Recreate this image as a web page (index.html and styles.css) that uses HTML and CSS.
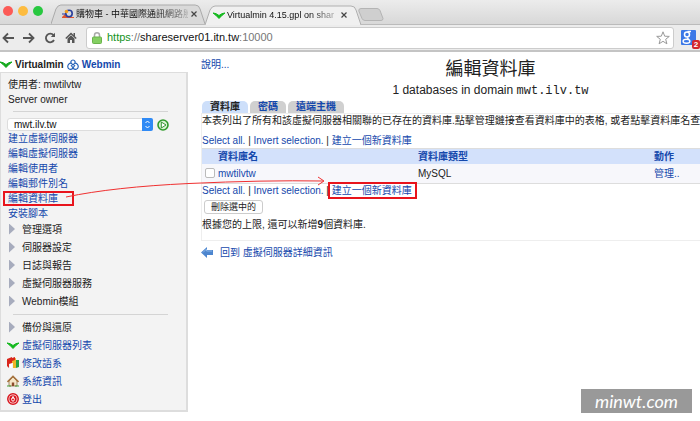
FILE: index.html
```html
<!DOCTYPE html>
<html lang="zh-Hant">
<head>
<meta charset="utf-8">
<title>Virtualmin 4.15.gpl on shareserver01.itn.tw</title>
<link rel="stylesheet" href="styles.css">
</head>
<body>
<header class="browser">
  <div class="tabstrip">
    <span class="lights"><i class="light red"></i><i class="light amber"></i><i class="light green"></i></span>
    <div class="tab">
      <svg class="tab-shape" viewBox="0 0 156 20" preserveAspectRatio="none" aria-hidden="true"><path d="M0 20 L5 5 Q7 1 10 1 H146 Q150 1 151 5 L156 20" fill="#d9d9d9" stroke="#aaa"/></svg>
      <svg class="favicon" width="12" height="10" viewBox="0 0 12 10" aria-hidden="true"><path d="M0 8 3 5l2 3h7v1H0z" fill="#e0552f"/><circle cx="7" cy="4.500" r="3.200" fill="none" stroke="#2b3f9c" stroke-width="1.600"/><circle cx="4.500" cy="2.500" r="1.800" fill="#f0a020"/><path d="M0 5h4" stroke="#2b3f9c"/></svg>
      <span class="tab-title">購物車 - 中華國際通訊網路股</span>
      <button class="close" type="button" aria-label="關閉分頁"><svg width="6" height="6" viewBox="0 0 6 6"><path d="M.5.5l5 5M5.500.5l-5 5" stroke="#444" stroke-width="1.200"/></svg></button>
    </div>
    <div class="tab active">
      <svg class="tab-shape" viewBox="0 0 156 20" preserveAspectRatio="none" aria-hidden="true"><path d="M0 20 L5 5 Q7 1 10 1 H146 Q150 1 151 5 L156 20" fill="#f0f0f0" stroke="#b0b0b0"/></svg>
      <svg class="favicon" width="12" height="7" viewBox="0 0 12 7" aria-hidden="true"><path d="M0 1q3 0 6 2.500Q9 1 12 1 9 3 6 6.500 3 3 0 1z" fill="#12b81c" stroke="#12b81c"/></svg>
      <span class="tab-title">Virtualmin 4.15.gpl on shar</span>
      <button class="close" type="button" aria-label="關閉分頁"><svg width="6" height="6" viewBox="0 0 6 6"><path d="M.5.5l5 5M5.500.5l-5 5" stroke="#444" stroke-width="1.200"/></svg></button>
    </div>
    <button class="newtab" type="button" aria-label="新分頁"><svg width="26" height="13" viewBox="0 0 26 13"><path d="M3 .5h16q2 0 3 2l3 8q0 2-2 2H7q-2 0-3-2L.8 3Q.5.5 3 .5z" fill="#cfcfcf" stroke="#b4b4b4"/></svg></button>
  </div>
  <div class="toolbar">
    <button class="nav" type="button" aria-label="上一頁"><svg width="12" height="12" viewBox="0 0 12 12"><path d="M12 6H1.500M6 1.500 1.500 6 6 10.500" fill="none" stroke="#555" stroke-width="1.800"/></svg></button>
    <button class="nav" type="button" aria-label="下一頁"><svg width="12" height="12" viewBox="0 0 12 12"><path d="M0 6h10.500M6 1.500 10.500 6 6 10.500" fill="none" stroke="#555" stroke-width="1.800"/></svg></button>
    <button class="nav" type="button" aria-label="重新載入"><svg width="12" height="12" viewBox="0 0 12 12"><path d="M9.500 3.200A4.300 4.300 0 1 0 10 8" fill="none" stroke="#555" stroke-width="1.800"/><path d="M11 .8V5H6.800z" fill="#555"/></svg></button>
    <button class="nav" type="button" aria-label="首頁"><svg width="12" height="12" viewBox="0 0 12 12"><path d="M.8 6.500 6 1.500l5.200 5" fill="none" stroke="#555" stroke-width="1.500"/><path d="M8.500 1h1.500v3H8.500zM2.500 6.500 6 3.300l3.500 3.200V11H7V8H5v3H2.500z" fill="#555"/></svg></button>
    <div class="omnibox">
      <svg width="10" height="12" viewBox="0 0 10 12" aria-hidden="true"><path d="M2.500 6V3.300a2.500 2.500 0 0 1 5 0V6" fill="none" stroke="#aaa" stroke-width="1.500"/><rect x=".5" y="5" width="9" height="6.500" rx="1" fill="#84cf62" stroke="#6bb34c"/></svg>
      <span class="url"><span class="scheme">https</span><span class="dim">://</span>shareserver01.itn.tw<span class="dim">:10000</span></span>
      <button class="star" type="button" aria-label="加入書籤"><svg width="14" height="14" viewBox="0 0 14 14"><path d="M7 .8 8.700 5.200l4.600.2-3.600 2.900 1.200 4.500L7 10.300l-3.900 2.500 1.200-4.500L.7 5.400l4.600-.2z" fill="#fff" stroke="#999"/></svg></button>
    </div>
    <button class="ext" type="button" aria-label="擴充功能，2 則通知"><svg width="15" height="15" viewBox="0 0 15 15"><rect width="15" height="15" rx="1" fill="#3b78e7"/><path d="M10 1.500H6.500M7 7.500Q6 8.500 8 9.500" fill="none" stroke="#fff" stroke-width="1.400"/><circle cx="6" cy="4.500" r="2.500" fill="none" stroke="#fff" stroke-width="1.500"/><ellipse cx="5.500" cy="11.300" rx="3.400" ry="2" fill="none" stroke="#fff" stroke-width="1.400"/></svg><span class="count">2</span></button>
  </div>
</header>

<div class="page">
  <nav class="side">
    <div class="brands">
      <svg width="12" height="7" viewBox="0 0 12 7" aria-hidden="true"><path d="M0 1q3 0 6 2.500Q9 1 12 1 9 3 6 6.500 3 3 0 1z" fill="#12a81c" stroke="#12a81c"/></svg>
      <b>Virtualmin</b>
      <svg width="12" height="12" viewBox="0 0 12 12" aria-hidden="true"><path d="M6 1c2 0 2.500 2 1.800 3.200C9.500 4 11.500 5.500 11.200 8c-.2 2.500-3 3-5.200 1.200C3.800 11 1 10.500.8 8 .5 5.500 2.500 4 4.200 4.200 3.500 3 4 1 6 1zM4 6l2 3 2-3M4.200 4.200 6 6l1.800-1.800" fill="#fff" stroke="#2562b8" stroke-width="1.200"/></svg>
      <a href="#webmin"><b>Webmin</b></a>
    </div>
    <div class="box">
      <div class="line">使用者: mwtilvtw</div>
      <div class="line">Server owner</div>
      <hr>
      <form class="domain">
        <span class="picker">
          <select aria-label="網域"><option>mwt.ilv.tw</option></select>
          <svg class="stepper" width="11" height="13" viewBox="0 0 11 13" aria-hidden="true"><path d="M0 0h9q2 0 2 2v9q0 2-2 2H0z" fill="#2f8af5"/><path d="M3.500 5 5.500 3l2 2M3.500 8l2 2 2-2" fill="none" stroke="#fff"/></svg>
        </span>
        <button class="go" type="button" aria-label="前往"><svg width="12" height="12" viewBox="0 0 12 12"><circle cx="6" cy="6" r="5" fill="#d9f2d3" stroke="#2f9a2a" stroke-width="1.600"/><path d="M4.300 3 9 6 4.300 9z" fill="#fff" stroke="#238a20" stroke-width=".9"/></svg></button>
      </form>
      <ul class="links">
        <li><a href="#create">建立虛擬伺服器</a></li>
        <li><a href="#edit">編輯虛擬伺服器</a></li>
        <li><a href="#users">編輯使用者</a></li>
        <li><a href="#mail">編輯郵件別名</a></li>
        <li><a class="marked" href="#db">編輯資料庫</a></li>
        <li><a href="#scripts">安裝腳本</a></li>
      </ul>
      <ul class="tree">
        <li><i class="fold"></i>管理選項</li>
        <li><i class="fold"></i>伺服器設定</li>
        <li><i class="fold"></i>日誌與報告</li>
        <li><i class="fold"></i>虛擬伺服器服務</li>
        <li><i class="fold"></i>Webmin模組</li>
      </ul>
      <hr>
      <ul class="tree">
        <li><i class="fold"></i>備份與還原</li>
        <li><svg width="12" height="7" viewBox="0 0 12 7" aria-hidden="true"><path d="M0 1q3 0 6 2.500Q9 1 12 1 9 3 6 6.500 3 3 0 1z" fill="#12b81c" stroke="#12b81c"/></svg><a href="#list">虛擬伺服器列表</a></li>
        <li><svg width="12" height="12" viewBox="0 0 12 12" aria-hidden="true"><path d="M0 2 5 0v6L2 7v4L0 9z" fill="#d9261c"/><path d="M5 2l4-1v10H6V6H5z" fill="#f0b429"/><path d="M5 1l3-1v3L5 4z" fill="#d9261c"/><path d="M9 3h3v7L9 11z" fill="#27a243"/><path d="M3 7h2v4H3z" fill="#fff"/></svg><a href="#lang">修改語系</a></li>
        <li><svg width="12" height="12" viewBox="0 0 12 12" aria-hidden="true"><path d="M2 6 6 2l4 4v5H2z" fill="#f5e6c8" stroke="#8a7048" stroke-width=".8"/><path d="M.5 7 6 1.300 11.500 7" fill="none" stroke="#a5713c" stroke-width="1.600"/><path d="M4.800 11V7.500h2.400V11z" fill="#8b4a2b"/><path d="M0 10.500h4v1H0zM8 10.500h4v1H8z" fill="#46a03c"/></svg><a href="#info">系統資訊</a></li>
        <li><svg width="12" height="12" viewBox="0 0 12 12" aria-hidden="true"><circle cx="6" cy="6" r="5.200" fill="#fff" stroke="#d8141c" stroke-width="1.500"/><circle cx="6" cy="6" r="3.700" fill="#d8141c"/><ellipse cx="6" cy="6.300" rx="1.400" ry="1.900" fill="none" stroke="#fff"/><path d="M6 3v3" stroke="#fff"/></svg><a href="#logout">登出</a></li>
      </ul>
    </div>
  </nav>

  <main class="main">
    <div class="heading">
      <a href="#help">說明...</a>
      <div class="titles">
        <h1>編輯資料庫</h1>
        <p>1 databases in domain <code>mwt.ilv.tw</code></p>
      </div>
    </div>
    <div class="subtabs">
      <b class="subtab on">資料庫</b>
      <a class="subtab" href="#password">密碼</a>
      <a class="subtab" href="#hosts">遠端主機</a>
    </div>
    <section class="panel">
      <p class="desc">本表列出了所有和該虛擬伺服器相關聯的已存在的資料庫.點擊管理鏈接查看資料庫中的表格, 或者點擊資料庫名查</p>
      <p class="actions"><a href="#all">Select all.</a> | <a href="#invert">Invert selection.</a> | <a href="#new">建立一個新資料庫</a></p>
      <table>
        <thead><tr><th class="tick"></th><th class="name">資料庫名</th><th class="type">資料庫類型</th><th>動作</th></tr></thead>
        <tbody><tr><td><input id="db1" type="checkbox"></td><td><label for="db1"><a href="#mwtilvtw">mwtilvtw</a></label></td><td>MySQL</td><td><a href="#manage">管理..</a></td></tr></tbody>
      </table>
      <p class="actions"><a href="#all2">Select all.</a> | <a href="#invert2">Invert selection.</a> | <a class="marked" href="#new2">建立一個新資料庫</a></p>
      <button class="delete" type="button">刪除選中的</button>
      <p class="limit">根據您的上限, 還可以新增<b>9</b>個資料庫.</p>
    </section>
    <a class="back" href="#details"><svg width="12" height="11" viewBox="0 0 12 11" aria-hidden="true"><path d="M0 5.500 6 0v3h6v5H6v3z" fill="#4d86cf"/><path d="M2 5.500 5.500 2v2H11" fill="none" stroke="#8ab4e6"/></svg>回到 虛擬伺服器詳細資訊</a>
  </main>

  <svg class="arrow" width="264" height="28" viewBox="0 0 264 28" aria-hidden="true"><path d="M2 23Q50 13 125 9.500T259 7M254 3l6 4-6 4" fill="none" stroke="#f03030"/></svg>
</div>
<div class="watermark">minwt.com</div>
</body>
</html>
```
FILE: styles.css
```css
* { box-sizing: border-box; }

body {
  margin: 0;
  position: relative;
  min-height: 100vh;
  overflow: hidden;
  background: #fff;
  color: #222;
  font: 10px/15px "Liberation Sans", "Noto Sans CJK TC", sans-serif;
}

a { color: #1448ac; text-decoration: none; }
p, h1, ul { margin: 0; padding: 0; }
ul { list-style: none; }
svg { display: block; flex: none; }
button { padding: 0; border: 0; background: none; font: inherit; color: inherit; }

/* Browser frame */
.browser { border-bottom: 2px solid #c4c4c4; }

.tabstrip {
  display: flex;
  align-items: flex-end;
  height: 25px;
  padding-left: 3px;
  background: linear-gradient(#ececec, #d8d8d8);
  border-bottom: 1px solid #bbb;
}

.lights { display: flex; gap: 5px; width: 48px; padding-bottom: 8px; }
.light { width: 10px; height: 10px; border-radius: 50%; }
.red { background: #fc5b57; }
.amber { background: #fdbc40; }
.green { background: #28c840; }

.tab {
  position: relative;
  display: flex;
  align-items: center;
  width: 154px;
  height: 20px;
  padding: 0 5px 0 11px;
  font-size: 9px;
}
.tab.active { z-index: 1; width: 156px; margin-bottom: -1px; padding: 0 11px 0 8px; }
.tab-shape { position: absolute; inset: 0; width: 100%; height: 100%; }
.favicon { position: relative; margin-right: 2px; }
.tab-title {
  position: relative;
  flex: 1;
  overflow: hidden;
  white-space: nowrap;
  color: #111;
  mask-image: linear-gradient(to right, #000 75%, rgba(0, 0, 0, 0.2));
}
.close { position: relative; width: 12px; height: 12px; display: grid; place-items: center; }
.newtab { margin: 0 0 3px -3px; }

.toolbar {
  display: flex;
  align-items: center;
  height: 25px;
  padding-left: 2px;
  background: #ececec;
}
.nav { width: 21px; flex: none; }
.omnibox {
  display: flex;
  flex: 1;
  align-items: center;
  gap: 5px;
  height: 22px;
  padding: 0 3px 0 5px;
  background: #fff;
  border: 1px solid #ccc;
  border-radius: 3px;
}
.url { flex: 1; font-size: 11px; color: #111; }
.scheme { color: #12931a; }
.dim { color: #777; }
.ext { position: relative; width: 26px; padding-left: 7px; flex: none; }
.count {
  position: absolute;
  right: 0;
  bottom: -4px;
  width: 8px;
  height: 9px;
  background: #d3272c;
  border-radius: 2px;
  color: #fff;
  font: bold 8px/9px "Liberation Sans", sans-serif;
}

/* Page */
.page { position: relative; display: flex; padding-top: 5px; }
.side { flex: none; width: 188px; }

.brands { display: flex; align-items: center; gap: 3px; height: 15px; }
.box {
  padding: 4px 6px 2px;
  background: #f3f3f3;
  border: 1px solid #ddd;
  border-width: 1px 2px 2px 1px;
}
.line { padding-left: 1px; }
hr {
  height: 1px;
  margin: 4px 12px 3px 6px;
  border: 0;
  background: #d4d4d4;
}
.domain { display: flex; align-items: center; gap: 4px; margin-top: 6px; }
.picker { position: relative; flex: none; width: 146px; height: 13px; }
select {
  display: block;
  width: 100%;
  height: 100%;
  padding: 0 16px 0 6px;
  appearance: none;
  background: #fff;
  border: 1px solid #ddd;
  border-radius: 3px;
  color: #111;
  font: 10px/11px "Liberation Sans", sans-serif;
}
.stepper { position: absolute; right: 0; top: 0; }

.links { padding-left: 1px; margin-bottom: -1px; }
.marked { position: relative; }
.marked::after { content: ""; position: absolute; border: 2px solid #e8141c; }
.links .marked::after { inset: -2px -16px -2px -5px; }
.actions .marked::after { inset: -3px -5px -3px -4px; }

.tree li { display: flex; align-items: center; height: 18px; color: #222; }
.tree svg { margin-right: 3px; }
.fold {
  width: 6px;
  height: 11px;
  margin: 0 7px 0 2px;
  background: #a7acbd;
  clip-path: polygon(0 0, 100% 50%, 0 100%);
}

.main { flex: 1; min-width: 0; padding-left: 13px; }
.heading { display: grid; grid-template-columns: 80px 1fr; }
.titles { text-align: center; }
h1 { font-size: 18px; line-height: 24px; font-weight: 400; }
.titles p { font-size: 12px; line-height: 18px; }
code { font: 12px/18px "Liberation Mono", monospace; }

.subtabs { display: flex; gap: 2px; padding-left: 1px; margin-top: 1px; }
.subtab {
  height: 12px;
  padding: 0 8px;
  background: #d0d0d0;
  border-radius: 5px 5px 0 0;
  font-weight: 700;
  line-height: 12px;
}
.subtab.on { background: #cddffa; }

.panel {
  padding-bottom: 8px;
  border: 1px solid #eee;
  border-right: 0;
}
.desc { line-height: 14px; white-space: nowrap; }
.actions { line-height: 14px; }
.desc + .actions { margin-top: 6px; }

table {
  width: 100%;
  border-collapse: collapse;
  border-top: 1px solid #ddd;
  border-bottom: 1px solid #ddd;
  table-layout: fixed;
}
th, td { padding: 0; text-align: left; line-height: 15px; }
th { background: #d3e1fb; color: #1448ac; }
td { height: 19px; background: #f7f7fb; }
.tick { width: 16px; }
.name { width: 200px; }
.type { width: 236px; }
input {
  display: block;
  width: 10px;
  height: 10px;
  margin: 0 0 0 3px;
  appearance: none;
  background: #fff;
  border: 1px solid #bbb;
  border-radius: 2px;
}
.delete {
  display: block;
  height: 14px;
  margin: 2px 0 3px 2px;
  padding: 0 6px;
  background: #fff;
  border: 1px solid #ccc;
  border-radius: 3px;
  font-size: 9px;
  line-height: 12px;
}
.back { display: flex; align-items: center; gap: 7px; margin-top: 4px; }

.arrow { position: absolute; left: 64px; top: 122px; pointer-events: none; }

.watermark {
  position: absolute;
  right: 8px;
  bottom: 8px;
  width: 111px;
  background: #999;
  color: #fff;
  font: italic 18px/24px Lato, sans-serif;
  text-align: center;
}
```
